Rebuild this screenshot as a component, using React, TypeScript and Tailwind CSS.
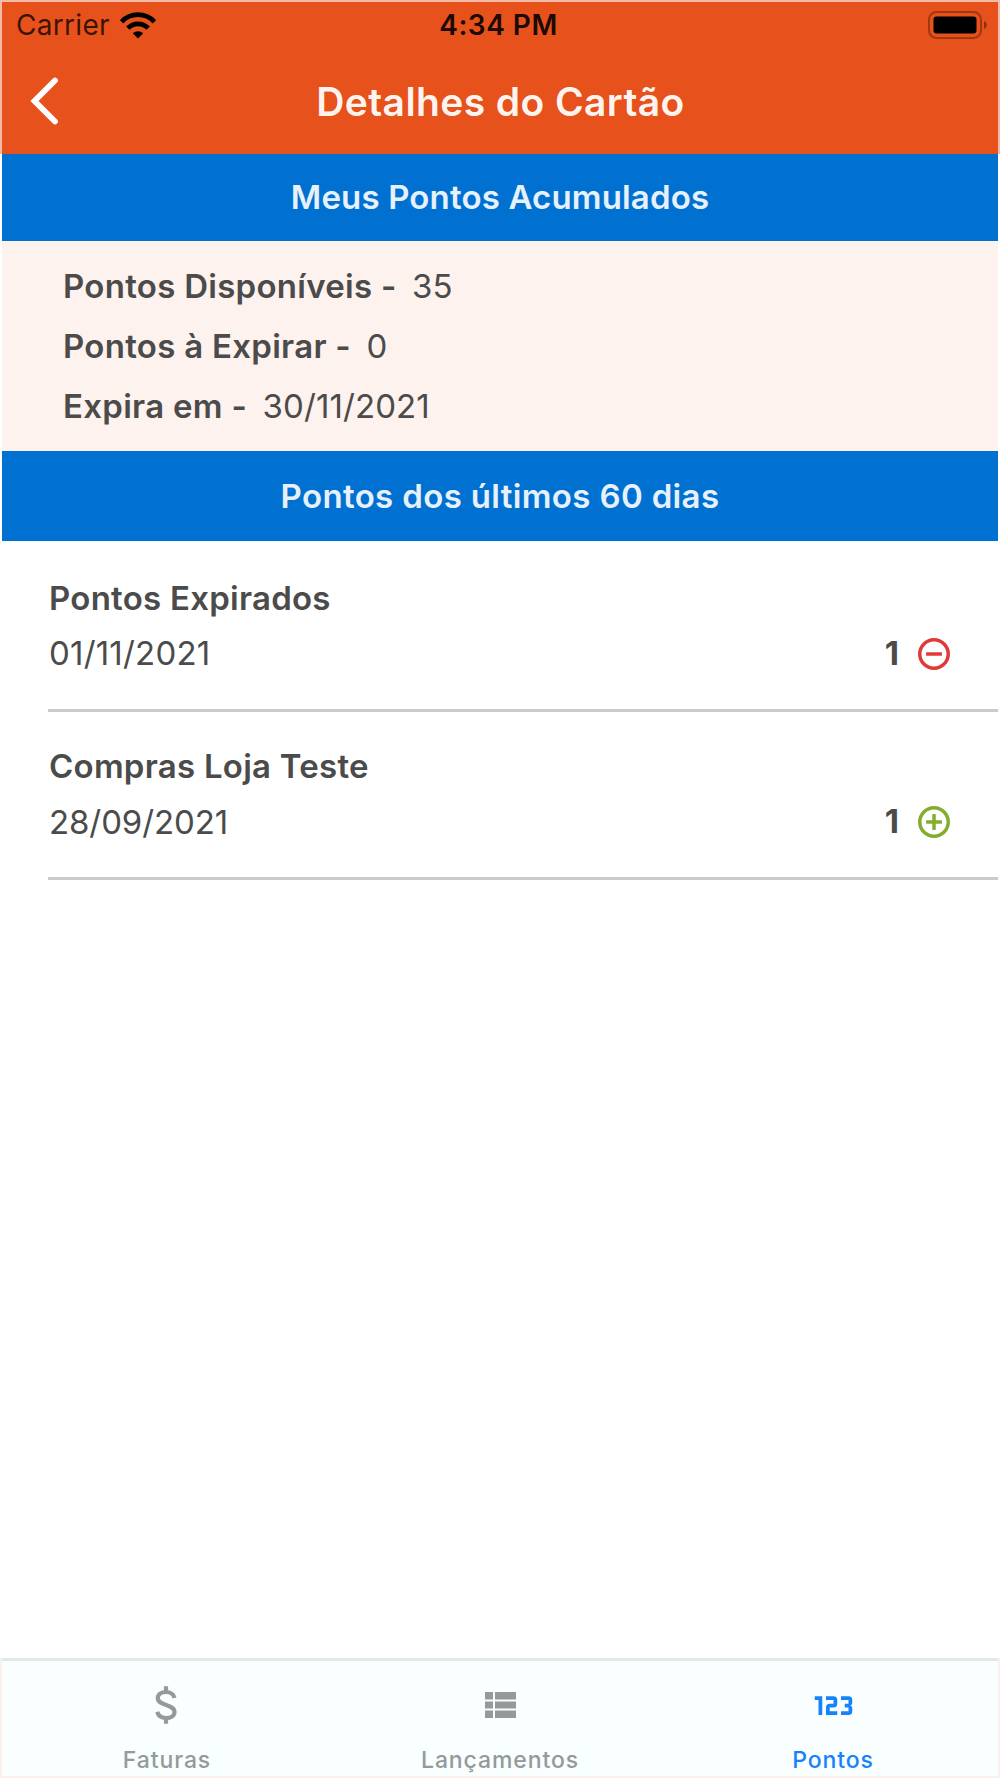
import type { ReactNode } from 'react'

interface PointsEntry {
  title: string
  date: string
  points: number
  kind: 'credit' | 'debit'
  dateSpacing: string
}

const entries: PointsEntry[] = [
  { title: 'Pontos Expirados', date: '01/11/2021', points: 1, kind: 'debit', dateSpacing: 'tracking-[0.2px]' },
  { title: 'Compras Loja Teste', date: '28/09/2021', points: 1, kind: 'credit', dateSpacing: 'tracking-[-0.1px]' },
]

function WifiIcon() {
  return (
    <svg viewBox="0 0 36 27" className="h-[27px] w-9" fill="none" stroke="#000" strokeWidth="4.8">
      <path d="M1.6 9.8C10.6 .3 25.4 .3 34.4 9.8" />
      <path d="M7.8 16.2c5.7-5.9 14.7-5.9 20.4 0" />
      <path d="M18 26.5l-5.2-5.2c2.9-2.8 7.5-2.8 10.4 0z" fill="#000" stroke="none" />
    </svg>
  )
}

function BatteryIcon() {
  return (
    <svg viewBox="0 0 60 28" className="h-7 w-[60px]">
      <rect x="1" y="1" width="52" height="26" rx="7.5" fill="none" stroke="#000" strokeOpacity=".3" strokeWidth="2" />
      <rect x="5.5" y="5.5" width="43" height="17" rx="3" fill="#000" />
      <path d="M56 10c3.6 1.2 3.6 6.8 0 8z" fill="#000" fillOpacity=".4" />
    </svg>
  )
}

function CircleIcon({ kind }: { kind: 'credit' | 'debit' }) {
  return (
    <svg
      viewBox="0 0 24 24"
      className={`h-[38px] w-[38px] ${kind === 'credit' ? 'text-[#84ad2d]' : 'text-[#df3b36]'}`}
      fill="none"
      stroke="currentColor"
      strokeWidth="2.2"
    >
      <circle cx="12" cy="12" r="9" />
      <path d="M7 12h10" />
      {kind === 'credit' && <path d="M12 7v10" />}
    </svg>
  )
}

function SectionTitle({ children, className }: { children: ReactNode; className: string }) {
  return (
    <h2 className={`flex items-center justify-center bg-[#0070d1] text-[33px] font-semibold text-[#e6f1fb] ${className}`}>
      {children}
    </h2>
  )
}

function InfoRow({ label, value }: { label: string; value: string }) {
  return (
    <div className="flex h-[60px] items-center text-[33px] text-[#4b4b4b]">
      <span className="font-semibold tracking-[0.28px]">{label} -</span>
      <span className="ml-[15.5px] tracking-[0.1px]">{value}</span>
    </div>
  )
}

function EntryRow({ entry }: { entry: PointsEntry }) {
  return (
    <li className="ml-[46px] flex h-[168.5px] items-start justify-between border-b-[3px] border-[#cacaca] pt-[26.5px] pl-px text-[33px] text-[#4b4b4b]">
      <div>
        <p className="h-[55.5px] leading-[56px] font-semibold tracking-[0.25px]">{entry.title}</p>
        <p className={`h-[56px] leading-[56px] ${entry.dateSpacing}`}>{entry.date}</p>
      </div>
      <div className="mt-[56px] mr-[45.5px] flex h-14 items-center">
        <span className="mr-[15.5px] font-bold">{entry.points}</span>
        <CircleIcon kind={entry.kind} />
      </div>
    </li>
  )
}

function Tab({ label, active, children }: { label: string; active?: boolean; children: ReactNode }) {
  return (
    <button
      type="button"
      className={`flex w-[330px] flex-col items-center pt-[18px] ${active ? 'text-[#1683fb]' : 'text-[#949a9a]'}`}
    >
      <span className="flex h-[52px] items-center">{children}</span>
      <span className="mt-[15px] h-7 text-[23px] leading-7 font-medium tracking-[0.9px]">{label}</span>
    </button>
  )
}

export default function App() {
  return (
    <div className="flex h-[1778px] w-[1000px] flex-col bg-white font-['Inter',sans-serif]">
      <header className="h-[154px] border-x-2 border-t-2 border-[#f5bba6] bg-[#e7511b]">
        <div className="flex h-[46px] items-center justify-between pr-[10px] pl-[14px] text-black">
          <div className="flex w-[196px] items-center gap-[10px]">
            <span className="text-[28px] tracking-[0.3px] text-black/75">Carrier</span>
            <WifiIcon />
          </div>
          <span className="text-[28px] font-semibold tracking-[0.5px] text-black/90">4:34 PM</span>
          <div className="flex w-[203px] justify-end pb-px">
            <BatteryIcon />
          </div>
        </div>
        <div className="flex h-[106px] items-center pl-[28px]">
          <svg viewBox="0 0 30 48" className="h-12 w-[30px]" fill="none" stroke="#fff" strokeWidth="5.8" strokeLinecap="round">
            <path d="M25 3.5L4.5 24 25 44.5" />
          </svg>
          <h1 className="flex-1 pt-[2px] pr-[57px] text-center text-[39px] font-semibold tracking-[0.4px] text-white/95">Detalhes do Cartão</h1>
        </div>
      </header>

      <main className="mx-[2px] flex-1">
        <SectionTitle className="h-[87px] tracking-[0.15px]">Meus Pontos Acumulados</SectionTitle>
        <section className="h-[210px] bg-[#fef2ee] pt-[16px] pl-[61px]">
          <InfoRow label="Pontos Disponíveis" value="35" />
          <InfoRow label="Pontos à Expirar" value="0" />
          <InfoRow label="Expira em" value="30/11/2021" />
        </section>
        <SectionTitle className="h-[90px] pt-[2px] tracking-[0.35px]">Pontos dos últimos 60 dias</SectionTitle>
        <ul className="pt-[2px]">
          {entries.map(entry => (
            <EntryRow key={entry.title} entry={entry} />
          ))}
        </ul>
      </main>

      <nav className="flex h-[120px] border-x-2 border-b-2 border-[#fdefeb] bg-[#f9fefe]">
        <div className="flex w-full justify-between border-t-[3px] border-[#e3e8e8]">
          <Tab label="Faturas">
            <svg viewBox="0 0 24 40" className="mr-[2px] h-10 w-6" fill="none" stroke="currentColor" strokeWidth="4.2">
              <path d="M20.500 13C19.500 9 16.500 7 12 7c-5 0-8.200 2.300-8.200 6 0 8.500 16.700 5.500 16.700 14 0 4-3.700 6-8.500 6s-7.800-2.200-8.700-6.200" />
              <path d="M12 1.200v6M12 32.800v6" />
            </svg>
          </Tab>
          <Tab label="Lançamentos">
            <svg viewBox="0 0 32 26" className="ml-[2px] h-[26px] w-8" fill="currentColor">
              <path d="M0 0h8v7.5H0zM10 0h21v7.5H10zM0 9.5h8v7H0zM10 9.5h21v7H10zM0 18.5h8V26H0zM10 18.5h21V26H10z" />
            </svg>
          </Tab>
          <Tab label="Pontos" active>
            <svg viewBox="0 0 24 24" className="h-[45px] w-[45px]" fill="currentColor">
              <path d="M4 17V9H2V7h4v10H4zM22 15a2 2 0 0 1-2 2h-4v-2h4v-2h-2v-2h2V9h-4V7h4a2 2 0 0 1 2 2v1.5a1.5 1.5 0 0 1-1.5 1.5 1.5 1.5 0 0 1 1.5 1.5V15zM14 15v2H8v-4a2 2 0 0 1 2-2h2V9H8V7h4a2 2 0 0 1 2 2v2a2 2 0 0 1-2 2h-2v2h4z" />
            </svg>
          </Tab>
        </div>
      </nav>
    </div>
  )
}
